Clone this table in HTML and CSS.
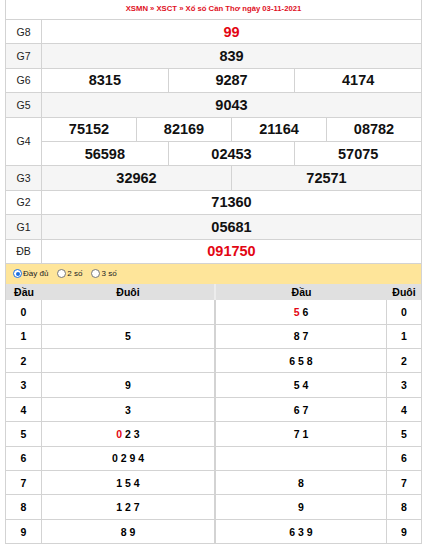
FILE: index.html
```html
<!DOCTYPE html>
<html lang="vi">
<head>
<meta charset="utf-8">
<title>XSCT 03-11-2021</title>
<link rel="stylesheet" href="styles.css">
</head>
<body>
<div class="kq">
  <div class="title">XSMN » XSCT » Xổ số Cần Thơ ngày 03-11-2021</div>
  <div class="row"><div class="lbl">G8</div><div class="vals"><div class="v red big">99</div></div></div>
  <div class="row alt"><div class="lbl">G7</div><div class="vals"><div class="v">839</div></div></div>
  <div class="row"><div class="lbl">G6</div><div class="vals"><div class="v">8315</div><div class="v">9287</div><div class="v">4174</div></div></div>
  <div class="row alt"><div class="lbl">G5</div><div class="vals"><div class="v">9043</div></div></div>
  <div class="row double"><div class="lbl">G4</div>
    <div class="stack">
      <div class="vals sub"><div class="v">75152</div><div class="v">82169</div><div class="v">21164</div><div class="v">08782</div></div>
      <div class="vals sub"><div class="v">56598</div><div class="v">02453</div><div class="v">57075</div></div>
    </div>
  </div>
  <div class="row alt"><div class="lbl">G3</div><div class="vals"><div class="v">32962</div><div class="v">72571</div></div></div>
  <div class="row"><div class="lbl">G2</div><div class="vals"><div class="v">71360</div></div></div>
  <div class="row alt"><div class="lbl">G1</div><div class="vals"><div class="v">05681</div></div></div>
  <div class="row"><div class="lbl">ĐB</div><div class="vals"><div class="v red">091750</div></div></div>

  <div class="opts">
    <span class="opt"><span class="radio on"></span>Đầy đủ</span>
    <span class="opt"><span class="radio"></span>2 số</span>
    <span class="opt"><span class="radio"></span>3 số</span>
  </div>

  <div class="lt head">
    <div class="c c1">Đầu</div><div class="c c2">Đuôi</div><div class="c c3">Đầu</div><div class="c c4">Đuôi</div>
  </div>
  <div class="lt"><div class="c c1">0</div><div class="c c2"></div><div class="c c3"><span class="red">5</span> 6</div><div class="c c4">0</div></div>
  <div class="lt"><div class="c c1">1</div><div class="c c2">5</div><div class="c c3">8 7</div><div class="c c4">1</div></div>
  <div class="lt"><div class="c c1">2</div><div class="c c2"></div><div class="c c3">6 5 8</div><div class="c c4">2</div></div>
  <div class="lt"><div class="c c1">3</div><div class="c c2">9</div><div class="c c3">5 4</div><div class="c c4">3</div></div>
  <div class="lt"><div class="c c1">4</div><div class="c c2">3</div><div class="c c3">6 7</div><div class="c c4">4</div></div>
  <div class="lt"><div class="c c1">5</div><div class="c c2"><span class="red">0</span> 2 3</div><div class="c c3">7 1</div><div class="c c4">5</div></div>
  <div class="lt"><div class="c c1">6</div><div class="c c2">0 2 9 4</div><div class="c c3"></div><div class="c c4">6</div></div>
  <div class="lt"><div class="c c1">7</div><div class="c c2">1 5 4</div><div class="c c3">8</div><div class="c c4">7</div></div>
  <div class="lt"><div class="c c1">8</div><div class="c c2">1 2 7</div><div class="c c3">9</div><div class="c c4">8</div></div>
  <div class="lt"><div class="c c1">9</div><div class="c c2">8 9</div><div class="c c3">6 3 9</div><div class="c c4">9</div></div>
</div>
</body>
</html>
```
FILE: styles.css
```css
* { box-sizing: border-box; }
html, body { margin: 0; padding: 0; background: #fff; }
body { font-family: "Liberation Sans", Arial, sans-serif; color: #000; }

.kq {
  margin-left: 5px;
  width: 417px;
  border-left: 1px solid #d3d3d3;
  border-right: 1px solid #d3d3d3;
}

.title {
  height: 20px;
  border-bottom: 1px solid #d3d3d3;
  display: flex;
  align-items: center;
  justify-content: center;
  font-size: 7.7px;
  font-weight: bold;
  color: #e0101e;
  padding-bottom: 2px;
}

.row {
  display: flex;
  height: 24.4px;
  border-bottom: 1px solid #d3d3d3;
}
.row.alt { background: #f5f5f5; }
.row.double { height: 48.8px; }

.lbl {
  width: 36px;
  flex: none;
  border-right: 1px solid #d3d3d3;
  display: flex;
  align-items: center;
  justify-content: center;
  font-size: 10.5px;
  color: #222;
}

.vals { flex: 1; display: flex; }
.stack { flex: 1; display: flex; flex-direction: column; }
.vals.sub { height: 24.4px; flex: none; }
.vals.sub:first-child { border-bottom: 1px solid #d3d3d3; }

.v {
  flex: 1 1 0;
  display: flex;
  align-items: center;
  justify-content: center;
  font-size: 14.5px;
  font-weight: bold;
  color: #111;
}
.v + .v { border-left: 1px solid #d3d3d3; }
.v.red, .red { color: #e30613; }

.opts {
  height: 20px;
  background: #fee59a;
  display: flex;
  align-items: center;
  padding-left: 7px;
  gap: 9px;
  font-size: 8px;
  color: #222;
}
.opt { display: flex; align-items: center; gap: 1px; }
.radio {
  width: 9px;
  height: 9px;
  border-radius: 50%;
  border: 1px solid #777;
  background: #fff;
  display: inline-block;
  position: relative;
}
.radio.on { border-color: #1a6fe0; }
.radio.on::after {
  content: "";
  position: absolute;
  left: 1.5px;
  top: 1.5px;
  width: 4px;
  height: 4px;
  border-radius: 50%;
  background: #1a6fe0;
}

.lt {
  display: flex;
  height: 24.4px;
  border-bottom: 1px solid #d3d3d3;
  font-size: 10.5px;
  font-weight: bold;
}
.lt.head {
  height: 16.4px;
  background: #e0e0e0;
  border-bottom: none;
}
.c {
  display: flex;
  align-items: center;
  justify-content: center;
  white-space: pre;
}
.c1 { width: 36px; border-right: 1px solid #d3d3d3; }
.c2 { width: 174px; border-right: 2px solid #d3d3d3; }
.c3 { width: 171px; border-right: 1px solid #d3d3d3; }
.c4 { flex: 1; }
.head .c1, .head .c3 { border-right: none; }
.head .c2 { border-right: 2px solid #ececec; }
.head .c1 { width: 36px; }
.head .c3 { width: 171px; }
```
